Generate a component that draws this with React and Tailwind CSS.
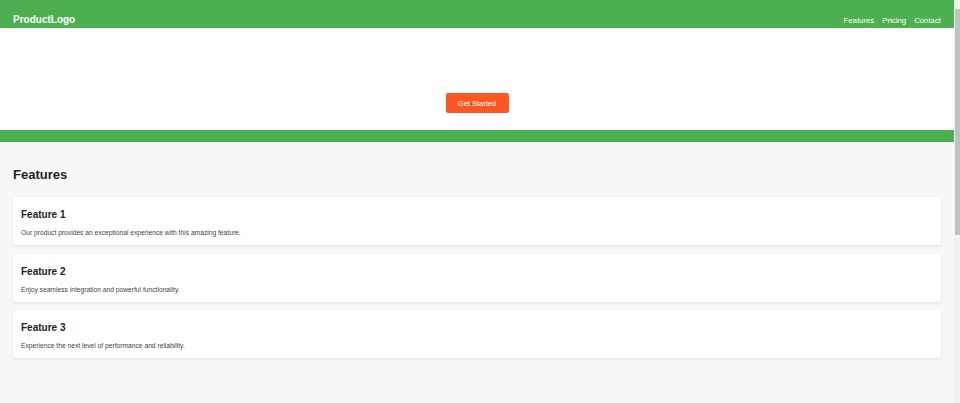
export default function App() {
  const features = [
    { t: "Feature 1", d: "Our product provides an exceptional experience with this amazing feature." },
    { t: "Feature 2", d: "Enjoy seamless integration and powerful functionality." },
    { t: "Feature 3", d: "Experience the next level of performance and reliability." },
  ];
  return (
    <div className="flex h-[403px] w-[960px] overflow-hidden font-['Liberation_Sans',Arial,sans-serif]">
      <div className="flex w-[954px] flex-col bg-[#f8f8f8]">
        <header className="flex h-[28px] items-end justify-between bg-[#4CAF50] px-[13px] pb-[2px] text-white">
          <div className="text-[10px] font-bold leading-[12px]">ProductLogo</div>
          <nav className="flex gap-[8px] text-[7.8px] leading-[10px]">
            <span>Features</span>
            <span>Pricing</span>
            <span>Contact</span>
          </nav>
        </header>
        <section className="flex h-[102px] items-start justify-center bg-white pt-[65px]">
          <button className="flex h-[20px] w-[63px] items-center justify-center rounded-[2px] bg-[#FF5722] pt-[1px] text-[7.5px] leading-none text-white">
            Get Started
          </button>
        </section>
        <div className="h-[12px] bg-[#4CAF50]" />
        <main className="px-[13px] pt-[25px]">
          <h2 className="text-[13px] font-bold leading-[16px] text-[#222]">Features</h2>
          <div className="mt-[14px] flex flex-col gap-[8.5px]">
            {features.map((f) => (
              <div
                key={f.t}
                className="h-[48px] rounded-[2px] bg-white px-[8px] pt-[11px] shadow-[0_1px_3px_rgba(0,0,0,0.1)]"
              >
                <h3 className="text-[10px] font-bold leading-[13px] text-[#222]">{f.t}</h3>
                <p className="mt-[8px] text-[6.7px] leading-[8px] text-[#444]">{f.d}</p>
              </div>
            ))}
          </div>
        </main>
      </div>
      <div className="flex w-[6px] flex-col bg-[#f1f1f1] pt-[9px]">
        <div className="h-[226px] w-[5px] self-end rounded-[1px] bg-[#c1c1c1]" />
      </div>
    </div>
  );
}
